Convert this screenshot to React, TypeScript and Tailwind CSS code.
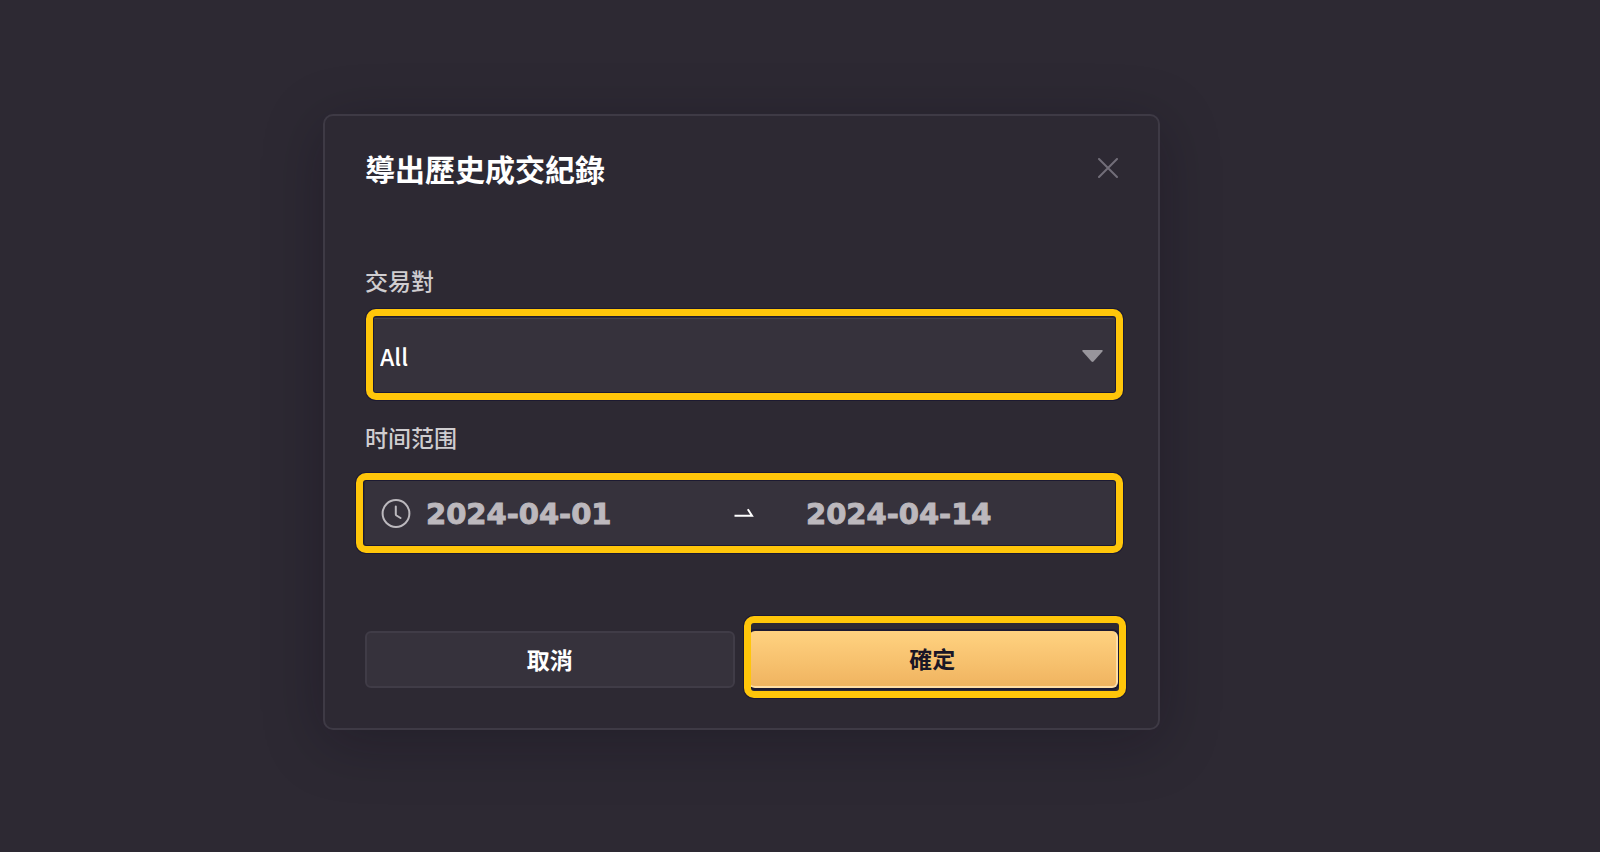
import { FC, ReactNode, useState } from "react";

const PAIRS = ["All", "BTC/USDT", "ETH/USDT"];

const Highlight: FC<{ className: string }> = ({ className }) => (
    <span
        aria-hidden="true"
        className={`pointer-events-none absolute rounded-[10px] border-[7px] border-[#ffc60a] ${className}`}
    />
);

const FieldLabel: FC<{ htmlFor: string; children: ReactNode }> = ({ htmlFor, children }) => (
    <label htmlFor={htmlFor} className="block text-[23px] leading-6 font-medium text-[#cfcdd0]">
        {children}
    </label>
);

const ClockIcon: FC = () => (
    <svg className="h-[30px] w-[30px] shrink-0" viewBox="0 0 30 30" fill="none" stroke="#bcb9be" strokeWidth="2">
        <circle cx="15" cy="15.5" r="13.4" />
        <path d="M14.8 8.500V16.200q0 .8 .7 1.300L19.500 20" strokeLinecap="round" />
    </svg>
);

const CloseIcon: FC = () => (
    <svg className="h-5 w-5" viewBox="0 0 20 20" fill="none" stroke="#726e79" strokeWidth="2">
        <path d="M1 1l18 18M19 1L1 19" strokeLinecap="round" />
    </svg>
);

const ArrowIcon: FC = () => (
    <svg className="h-[10px] w-5 shrink-0" viewBox="0 0 20 10" fill="none" stroke="#fff" strokeWidth="2">
        <path d="M0.5 7.800H18L13.800 1.200" strokeLinejoin="miter" />
    </svg>
);

const dateInput =
    "min-w-0 flex-1 bg-transparent pt-1 font-['DejaVu_Sans',sans-serif] text-[29px] font-bold text-[#bcb8bd] outline-none [-webkit-text-stroke:1px_#bcb8bd]";

const App: FC = () => {
    const [pair, setPair] = useState("All");
    const [start, setStart] = useState("2024-04-01");
    const [end, setEnd] = useState("2024-04-14");

    return (
        <main className="flex min-h-screen items-start justify-center bg-[#2d2933] pt-[114px] pr-[117px] font-['Noto_Sans_CJK_TC','Noto_Sans_CJK_SC',sans-serif]">
            <section
                role="dialog"
                aria-labelledby="dialog-title"
                className="w-full max-w-[837px] rounded-[10px] border-2 border-[#3e3a45] bg-[#2d2933] px-10 pt-8 pb-10 shadow-[0_12px_60px_rgba(10,8,22,0.28)]">
                <header className="flex items-center justify-between">
                    <h2 id="dialog-title" className="text-[30px] leading-10 font-bold text-white">
                        導出歷史成交紀錄
                    </h2>
                    <button type="button" aria-label="Close">
                        <CloseIcon />
                    </button>
                </header>

                <div className="mt-20">
                    <FieldLabel htmlFor="pair">交易對</FieldLabel>
                    <div className="relative mt-[26px]">
                        <select
                            id="pair"
                            value={pair}
                            onChange={(e) => setPair(e.target.value)}
                            className="block h-[76px] w-full appearance-none rounded-md border-t border-[#45414d] bg-[#36323c] px-[15px] text-[23px] font-medium text-white outline-none">
                            {PAIRS.map((p) => (
                                <option key={p}>{p}</option>
                            ))}
                        </select>
                        <svg
                            className="pointer-events-none absolute top-8 right-[15px] h-3 w-[21px]"
                            viewBox="0 0 21 12"
                            fill="#98959c">
                            <path d="M1 0h19q1.200 .3 .4 1.500L11.500 11.500q-1 .8-2 0L.6 1.500Q-.2 .3 1 0z" />
                        </svg>
                        <Highlight className="-top-[9px] right-[-5px] -bottom-[6px] left-px shadow-[0_0_0_1px_#1c1a32,inset_0_0_0_1px_#1c1a32]" />
                    </div>
                </div>

                <div className="mt-[31px]">
                    <FieldLabel htmlFor="start">时间范围</FieldLabel>
                    <div className="relative mt-[29px] flex h-[70px] items-center rounded-md bg-[#36323c] pr-1 pl-4">
                        <ClockIcon />
                        <input
                            id="start"
                            type="text"
                            value={start}
                            onChange={(e) => setStart(e.target.value)}
                            className={`ml-[15px] ${dateInput}`}
                        />
                        <ArrowIcon />
                        <input
                            type="text"
                            aria-label="End date"
                            value={end}
                            onChange={(e) => setEnd(e.target.value)}
                            className={`ml-[52px] ${dateInput}`}
                        />
                        <Highlight className="-top-[5px] right-[-5px] -bottom-[5px] -left-[9px] shadow-[0_0_0_1px_#1c1a32,inset_0_0_0_1px_#1c1a32]" />
                    </div>
                </div>

                <footer className="mt-[83px] grid grid-cols-2 gap-[14px]">
                    <button
                        type="button"
                        className="h-[57px] rounded-md border-2 border-[#403c47] bg-[#36323c] text-[23px] font-bold text-white">
                        取消
                    </button>
                    <div className="relative">
                        <button
                            type="submit"
                            className="block h-[57px] w-full rounded-md border-r-2 border-b-2 border-[#ffdfa6] bg-linear-to-b from-[#ffd280] to-[#f0b460] text-[23px] font-bold text-[#1a1626] shadow-[0_0_0_2px_#1c1a32]">
                            確定
                        </button>
                        <Highlight className="-top-[15px] right-[-8px] -bottom-[10px] -left-[5px] shadow-[0_0_0_1px_#1c1a32]" />
                    </div>
                </footer>
            </section>
        </main>
    );
};

export default App;
